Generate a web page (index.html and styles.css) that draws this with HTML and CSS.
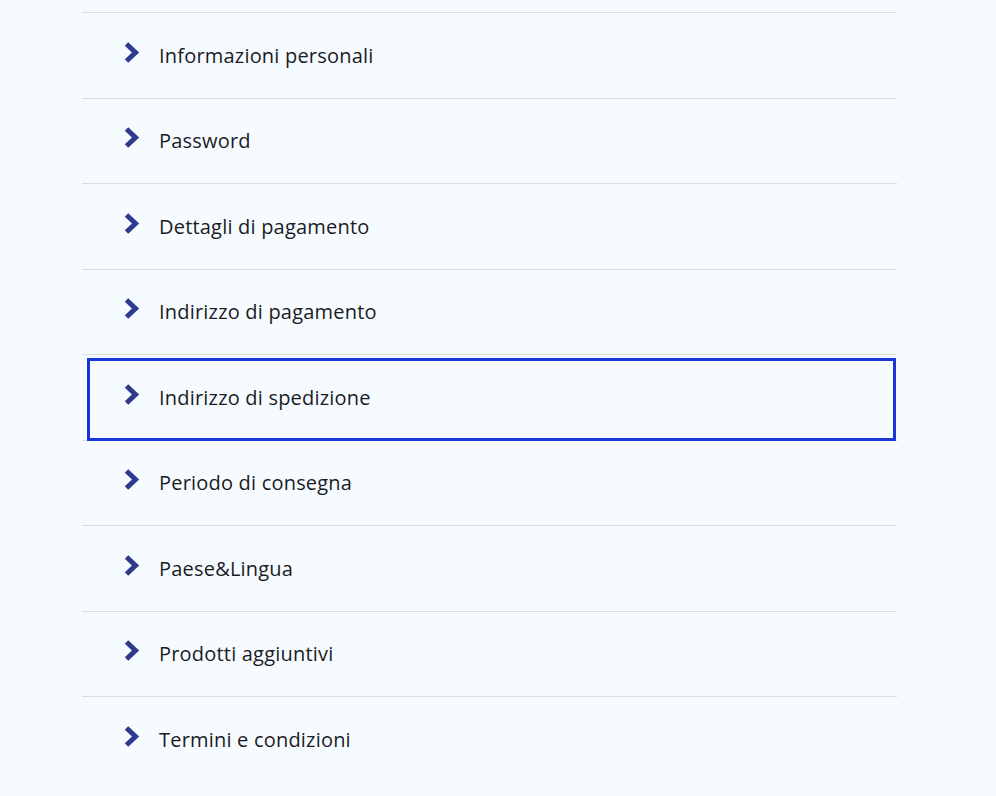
FILE: index.html
```html
<!DOCTYPE html>
<html lang="it">
<head>
<meta charset="utf-8">
<title>Account</title>
<link rel="stylesheet" href="styles.css">
</head>
<body>
<nav class="menu">
  <ul class="menu-list">
    <li class="menu-item"><a class="menu-link" href="#"><svg class="chev" viewBox="0 0 18 24"><path d="M3.5 3 L12.5 11.5 L3.5 20"/></svg><span class="label">Informazioni personali</span></a></li>
    <li class="menu-item"><a class="menu-link" href="#"><svg class="chev" viewBox="0 0 18 24"><path d="M3.5 3 L12.5 11.5 L3.5 20"/></svg><span class="label">Password</span></a></li>
    <li class="menu-item"><a class="menu-link" href="#"><svg class="chev" viewBox="0 0 18 24"><path d="M3.5 3 L12.5 11.5 L3.5 20"/></svg><span class="label">Dettagli di pagamento</span></a></li>
    <li class="menu-item"><a class="menu-link" href="#"><svg class="chev" viewBox="0 0 18 24"><path d="M3.5 3 L12.5 11.5 L3.5 20"/></svg><span class="label">Indirizzo di pagamento</span></a></li>
    <li class="menu-item"><a class="menu-link is-focused" href="#"><svg class="chev" viewBox="0 0 18 24"><path d="M3.5 3 L12.5 11.5 L3.5 20"/></svg><span class="label">Indirizzo di spedizione</span></a></li>
    <li class="menu-item"><a class="menu-link" href="#"><svg class="chev" viewBox="0 0 18 24"><path d="M3.5 3 L12.5 11.5 L3.5 20"/></svg><span class="label">Periodo di consegna</span></a></li>
    <li class="menu-item"><a class="menu-link" href="#"><svg class="chev" viewBox="0 0 18 24"><path d="M3.5 3 L12.5 11.5 L3.5 20"/></svg><span class="label">Paese&amp;Lingua</span></a></li>
    <li class="menu-item"><a class="menu-link" href="#"><svg class="chev" viewBox="0 0 18 24"><path d="M3.5 3 L12.5 11.5 L3.5 20"/></svg><span class="label">Prodotti aggiuntivi</span></a></li>
    <li class="menu-item"><a class="menu-link" href="#"><svg class="chev" viewBox="0 0 18 24"><path d="M3.5 3 L12.5 11.5 L3.5 20"/></svg><span class="label">Termini e condizioni</span></a></li>
  </ul>
</nav>
</body>
</html>
```
FILE: styles.css
```css
html, body {
  margin: 0;
  padding: 0;
  background: #f6fbff;
}
body {
  font-family: "Open Sans", "Noto Sans", sans-serif;
  color: #1b1b1f;
}
.menu {
  padding: 12px 99px 0 82px;
}
.menu-list {
  list-style: none;
  margin: 0;
  padding: 0;
}
.menu-item {
  border-top: 1px solid #d9dde2;
}
.menu-link {
  position: relative;
  display: flex;
  align-items: center;
  height: 84.5px;
  padding-left: 41px;
  text-decoration: none;
  color: #1b1b1f;
  font-size: 20px;
}
.label {
  margin-top: 0;
  letter-spacing: 0.2px;
}
.chev {
  width: 18px;
  height: 24px;
  margin-right: 18px;
  margin-top: -5px;
  flex: none;
}
.chev path {
  fill: none;
  stroke: #2d3a8e;
  stroke-width: 5;
  stroke-linejoin: miter;
  stroke-linecap: butt;
}
.is-focused::after {
  content: "";
  position: absolute;
  top: 3px;
  left: 5px;
  right: 1px;
  bottom: -1.5px;
  border: 3px solid #1a36d8;
}
```
